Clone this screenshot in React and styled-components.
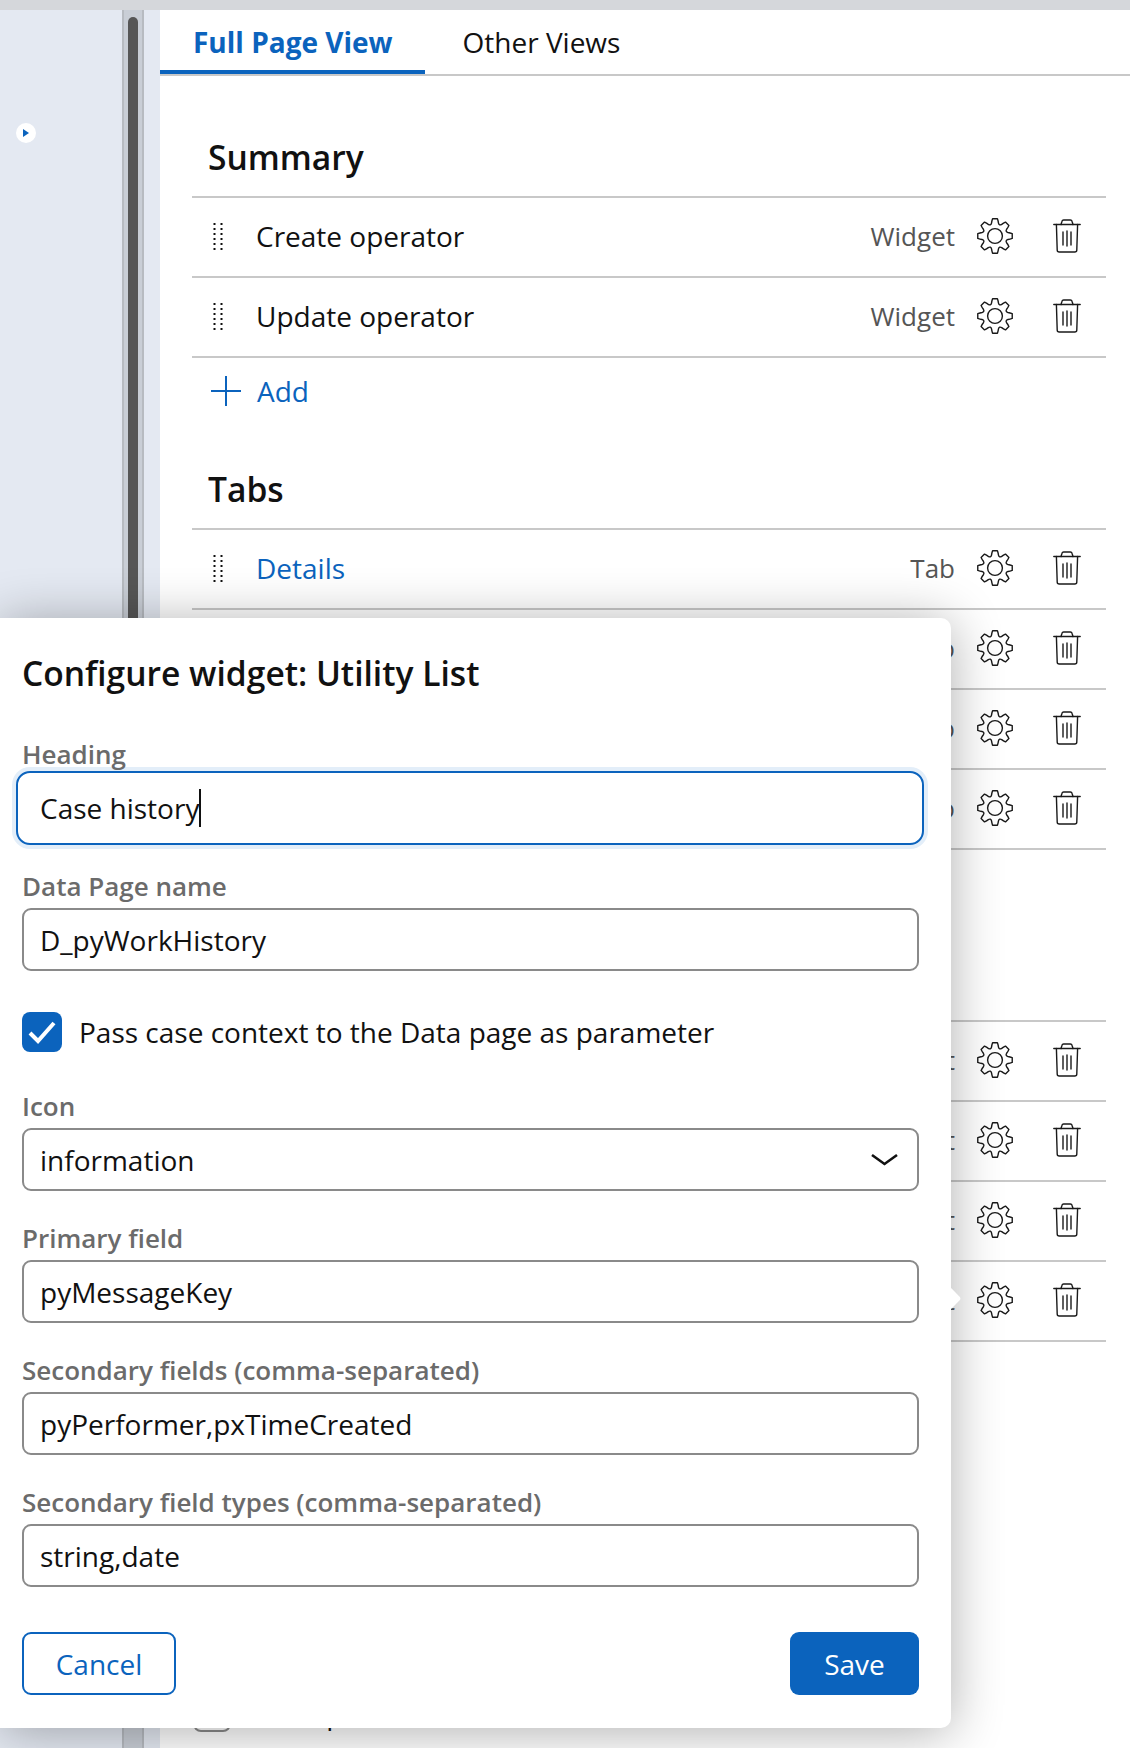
import React from "react";
import styled, { createGlobalStyle } from "styled-components";

const Global = createGlobalStyle`
  html, body { margin: 0; padding: 0; background: #fff; }
  body { font-family: "Open Sans", "Noto Sans", sans-serif; color: #111; }
  * { box-sizing: border-box; }
`;

const BLUE = "#0b63bd";

const Page = styled.div`
  position: relative;
  width: 1130px;
  height: 1748px;
  overflow: hidden;
  display: flex;
  flex-direction: column;
`;
const TopBar = styled.div`
  height: 10px;
  flex: none;
  background: #d5d7db;
`;
const Body = styled.div`
  flex: 1;
  display: flex;
  min-height: 0;
`;
const Sidebar = styled.aside`
  width: 122px;
  flex: none;
  background: #e4e9f2;
  padding: 113px 0 0 16px;
`;
const PlayDot = styled.div`
  width: 20px;
  height: 20px;
  border-radius: 50%;
  background: #fff;
  display: flex;
  align-items: center;
  justify-content: center;
`;
const Splitter = styled.div`
  width: 22px;
  flex: none;
  background: #c9ced6;
  border-left: 2px solid #b7bbc1;
  border-right: 2px solid #b7bbc1;
  padding: 7px 4px 60px;
`;
const Thumb = styled.div`
  height: 100%;
  border-radius: 6px 6px 0 0;
  background: #565656;
`;
const Gutter = styled.div`
  width: 16px;
  flex: none;
  background: #e4e9f2;
`;
const Main = styled.main`
  flex: 1;
  min-width: 0;
  background: #fff;
`;
const TabBar = styled.nav`
  display: flex;
  height: 66px;
  border-bottom: 2px solid #c8c8c8;
`;
const Tab = styled.div`
  height: 64px;
  padding: ${(p) => (p.$active ? "4px 32px 0 33px" : "0 32px 0 38px")};
  display: flex;
  align-items: center;
  font-size: 28px;
  font-weight: ${(p) => (p.$active ? 700 : 400)};
  color: ${(p) => (p.$active ? BLUE : "#111")};
  border-bottom: ${(p) => (p.$active ? `4px solid ${BLUE}` : "none")};
`;
const Content = styled.div`
  padding: 62px 24px 0 32px;
  display: flex;
  flex-direction: column;
`;
const Section = styled.section`
  margin-bottom: 42px;
`;
const SectionTitle = styled.h2`
  margin: 0 0 17px;
  padding: 0 0 2px 16px;
  height: 41px;
  line-height: 39px;
  font-size: 33.6px;
  font-weight: 600;
  color: #111;
`;
const Rows = styled.div`
  border-top: 2px solid #c8c8c8;
`;
const Row = styled.div`
  height: 80px;
  display: flex;
  align-items: center;
  border-bottom: 2px solid #c8c8c8;
  padding: 0 25px 2px 21px;
`;
const RowLabel = styled.span`
  flex: 1;
  margin-left: 33px;
  font-size: 28px;
  color: ${(p) => (p.$link ? BLUE : "#111")};
`;
const RowType = styled.span`
  font-size: 26px;
  color: #555;
  margin-right: 22px;
`;
const IconSlot = styled.span`
  display: flex;
  align-items: center;
  justify-content: center;
  width: ${(p) => p.$w}px;
  margin-left: ${(p) => p.$ml || 0}px;
`;
const AddRow = styled.div`
  height: 70px;
  display: flex;
  align-items: center;
  gap: 16px;
  padding: 0 0 5px 19px;
  font-size: 28px;
  color: ${BLUE};
`;
const CheckRow = styled.div`
  display: flex;
  align-items: center;
  gap: 17px;
  font-size: 28px;
`;
const PeekRow = styled(CheckRow)`
  padding-left: 1px;
  margin-top: 240px;
`;
const PeekBox = styled.span`
  width: 38px;
  height: 38px;
  flex: none;
  border: 2px solid #8a8a8a;
  border-radius: 8px;
`;

const Dialog = styled.div`
  position: absolute;
  left: 0;
  top: 618px;
  width: 951px;
  height: 1110px;
  background: #fff;
  border-radius: 0 10px 10px 0;
  box-shadow: 0 4px 52px rgba(0, 0, 0, 0.32);
  padding: 34px 32px 0 22px;
  display: flex;
  flex-direction: column;
  &::after {
    content: "";
    position: absolute;
    right: -7px;
    top: 672px;
    width: 17px;
    height: 17px;
    border-radius: 3px;
    background: #fff;
    transform: rotate(45deg);
  }
`;
const DialogTitle = styled.h1`
  margin: 0 0 42px;
  height: 42px;
  line-height: 42px;
  font-size: 33.6px;
  font-weight: 600;
  color: #111;
`;
const Field = styled.div`
  margin-top: ${(p) => p.$mt ?? 0}px;
  margin-bottom: ${(p) => p.$mb ?? 29}px;
`;
const Label = styled.div`
  height: 36px;
  line-height: 36px;
  margin-bottom: 4px;
  font-size: 26px;
  font-weight: 600;
  color: #6b6b6b;
`;
const Box = styled.div`
  height: 63px;
  width: 897px;
  display: flex;
  align-items: center;
  justify-content: space-between;
  padding: 0 19px 0 16px;
  border: 2px solid #8a8a8a;
  border-radius: 9px;
  background: #fff;
  font-size: 28px;
  color: #111;
`;
const FocusBox = styled(Box)`
  height: 74px;
  width: 908px;
  margin: -5px 0 0 -6px;
  padding-left: 22px;
  justify-content: flex-start;
  border-color: ${BLUE};
  border-radius: 14px;
  box-shadow: 0 0 0 4px #e3eef9;
`;
const Caret = styled.span`
  width: 2px;
  height: 38px;
  background: #111;
`;
const Check = styled.span`
  width: 40px;
  height: 40px;
  flex: none;
  border-radius: 8px;
  background: ${BLUE};
  display: flex;
  align-items: center;
  justify-content: center;
`;
const DialogActions = styled.div`
  margin-top: 16px;
  width: 897px;
  display: flex;
  justify-content: space-between;
`;
const GhostButton = styled.button`
  width: 154px;
  height: 63px;
  border: 2px solid ${BLUE};
  border-radius: 9px;
  background: #fff;
  color: ${BLUE};
  font: 400 28px "Open Sans", sans-serif;
`;
const SolidButton = styled.button`
  width: 129px;
  height: 63px;
  border: none;
  border-radius: 9px;
  background: ${BLUE};
  color: #fff;
  font: 400 28px "Open Sans", sans-serif;
`;

const gearPath = (() => {
  const c = 18, R = 17.4, r = 13.4, n = 8;
  const pt = (rad, deg) => {
    const a = ((deg - 90) * Math.PI) / 180;
    return `${(c + rad * Math.cos(a)).toFixed(2)} ${(c + rad * Math.sin(a)).toFixed(2)}`;
  };
  let d = "";
  for (let i = 0; i < n; i++) {
    const a = (i * 360) / n;
    d += `${i ? "L" : "M"}${pt(r, a - 15)} `;
    d += `Q${pt(r + 2, a - 12)} ${pt(R, a - 8)} `;
    d += `L${pt(R, a + 8)} `;
    d += `Q${pt(r + 2, a + 12)} ${pt(r, a + 15)} `;
    d += `Q${pt(r - 2.4, a + 22.5)} ${pt(r, a + 30)} `;
  }
  return d + "Z";
})();

const Gear = () => (
  <svg width="36" height="36" viewBox="0 0 36 36" fill="none" stroke="#1a1a1a" strokeWidth="1.4" strokeLinejoin="round">
    <path d={gearPath} />
    <circle cx="18" cy="18" r="7.4" />
  </svg>
);
const Trash = () => (
  <svg width="28" height="34" viewBox="0 0 28 34" fill="none" stroke="#1a1a1a" strokeWidth="1.4" strokeLinecap="round" strokeLinejoin="round">
    <path d="M0.8 5.5H27.2" />
    <path d="M8 5.5L9 2.2C9.2 1.4 9.8 1 10.6 1H17.4C18.2 1 18.8 1.4 19 2.2L20 5.5" />
    <path d="M3.4 5.5L4.2 31C4.2 32.2 5 33 6.2 33H21.8C23 33 23.8 32.2 23.8 31L24.6 5.5" />
    <path d="M10 13V26M14 12V27M18 13V26" />
  </svg>
);
const Grip = () => (
  <svg width="10" height="27" viewBox="0 0 10 27" fill="#111">
    {[0, 1, 2, 3, 4, 5].map((i) => (
      <g key={i}>
        <rect x="0.5" y={i * 5} width="2" height="2" />
        <rect x="7.5" y={i * 5} width="2" height="2" />
      </g>
    ))}
  </svg>
);
const Plus = () => (
  <svg width="30" height="30" viewBox="0 0 30 30" stroke={BLUE} strokeWidth="2" fill="none">
    <path d="M15 0V30M0 15H30" />
  </svg>
);
const Play = () => (
  <svg width="6" height="8" viewBox="0 0 6 8" fill={BLUE}>
    <path d="M0 0L6 4L0 8Z" />
  </svg>
);
const Chevron = () => (
  <svg width="27" height="13" viewBox="0 0 27 13" fill="none" stroke="#111" strokeWidth="2.6">
    <path d="M1 2L13.5 11L26 2" />
  </svg>
);
const Tick = () => (
  <svg width="28" height="24" viewBox="0 0 28 24" fill="none" stroke="#fff" strokeWidth="4">
    <path d="M2 13L10 21L26 3" />
  </svg>
);

const ListRow = ({ label, type, link }) => (
  <Row>
    <IconSlot $w={10}><Grip /></IconSlot>
    <RowLabel $link={link}>{label}</RowLabel>
    <RowType>{type}</RowType>
    <IconSlot $w={36}><Gear /></IconSlot>
    <IconSlot $w={28} $ml={40}><Trash /></IconSlot>
  </Row>
);

const ListSection = ({ title, type, items, links }) => (
  <Section>
    <SectionTitle>{title}</SectionTitle>
    <Rows>
      {items.map((item) => (
        <ListRow key={item} label={item} type={type} link={links} />
      ))}
    </Rows>
    <AddRow><Plus />Add</AddRow>
  </Section>
);

export default function App() {
  return (
    <Page>
      <Global />
      <TopBar />
      <Body>
        <Sidebar><PlayDot><Play /></PlayDot></Sidebar>
        <Splitter><Thumb /></Splitter>
        <Gutter />
        <Main>
          <TabBar>
            <Tab $active>Full Page View</Tab>
            <Tab>Other Views</Tab>
          </TabBar>
          <Content>
            <ListSection title="Summary" type="Widget" items={["Create operator", "Update operator"]} />
            <ListSection title="Tabs" type="Tab" links items={["Details", "Pulse", "Documents", "History"]} />
            <ListSection title="Utilities" type="Widget" items={["Attachments", "Followers", "Stakeholders", "Case history"]} />
            <PeekRow><PeekBox />Show panel</PeekRow>
          </Content>
        </Main>
      </Body>
      <Dialog>
        <DialogTitle>Configure widget: Utility List</DialogTitle>
        <Field $mb={23}>
          <Label>Heading</Label>
          <FocusBox>Case history<Caret /></FocusBox>
        </Field>
        <Field $mb={41}>
          <Label>Data Page name</Label>
          <Box>D_pyWorkHistory</Box>
        </Field>
        <CheckRow>
          <Check><Tick /></Check>
          Pass case context to the Data page as parameter
        </CheckRow>
        <Field $mt={36}>
          <Label>Icon</Label>
          <Box>information<Chevron /></Box>
        </Field>
        <Field>
          <Label>Primary field</Label>
          <Box>pyMessageKey</Box>
        </Field>
        <Field>
          <Label>Secondary fields (comma-separated)</Label>
          <Box>pyPerformer,pxTimeCreated</Box>
        </Field>
        <Field>
          <Label>Secondary field types (comma-separated)</Label>
          <Box>string,date</Box>
        </Field>
        <DialogActions>
          <GhostButton>Cancel</GhostButton>
          <SolidButton>Save</SolidButton>
        </DialogActions>
      </Dialog>
    </Page>
  );
}
